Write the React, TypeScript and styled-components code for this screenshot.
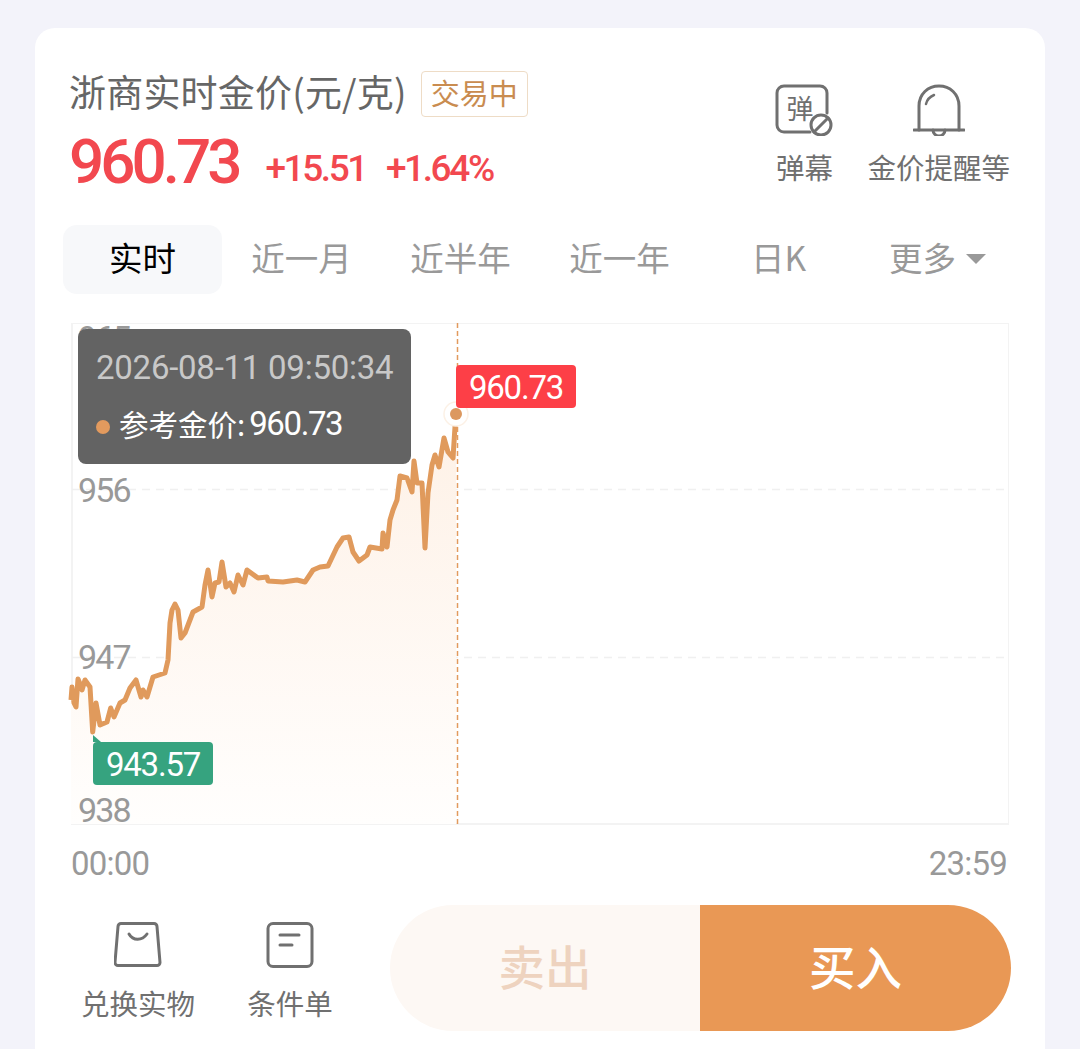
import React from 'react';
import styled, { createGlobalStyle } from 'styled-components';

const LATIN = `Roboto, "Noto Sans CJK SC", sans-serif`;
const CJK = `"Noto Sans CJK SC", Roboto, sans-serif`;

const GlobalStyle = createGlobalStyle`
    html, body {
        margin: 0;
        height: 1049px;
        overflow: hidden;
        background: #f3f3fa;
    }
    * {
        box-sizing: border-box;
    }
`;

const Card = styled.div`
    width: 1010px;
    height: 1060px;
    margin: 28px 0 0 35px;
    padding-top: 43px;
    background: #fff;
    border-radius: 20px;
    font-family: ${CJK};
`;

const Header = styled.div`
    display: flex;
    justify-content: space-between;
    height: 154px;
    padding: 0 35px;
`;

const TitleRow = styled.div`
    display: flex;
    align-items: center;
    gap: 14px;
    height: 46px;
`;

const Title = styled.div`
    margin-top: -7px;
    margin-left: -1px;
    font-size: 37px;
    line-height: 46px;
    letter-spacing: 0.2px;
    color: #666;
    white-space: nowrap;
`;

const Badge = styled.div`
    width: 107px;
    height: 46px;
    padding-bottom: 3px;
    border: 1px solid #eedcc6;
    border-radius: 4px;
    color: #c98c50;
    font-size: 29px;
    line-height: 40px;
    text-align: center;
`;

const PriceRow = styled.div`
    display: flex;
    align-items: flex-end;
    margin-top: 15px;
    color: #f2484f;
    font-family: ${LATIN};
`;

const Price = styled.div`
    margin-left: -1px;
    font-size: 62px;
    line-height: 60px;
    font-weight: 500;
    letter-spacing: -4px;
`;

const Change = styled.div`
    margin: 0 0 1px 27px;
    font-size: 37px;
    line-height: 44px;
    font-weight: 500;
    letter-spacing: -2.4px;
    & + & {
        margin-left: 20px;
    }
`;

const Actions = styled.div`
    display: flex;
    gap: 33px;
`;

const Action = styled.div`
    display: flex;
    flex-direction: column;
    align-items: center;
    padding-top: 13px;
    color: #707070;
`;

const ActionLabel = styled.div`
    margin-top: 11px;
    font-size: 28.5px;
    line-height: 40px;
    white-space: nowrap;
`;

const Tabs = styled.div`
    display: grid;
    grid-template-columns: repeat(6, 159px);
    margin-left: 28px;
`;

const Tab = styled.div<{ $active?: boolean }>`
    display: flex;
    align-items: center;
    justify-content: center;
    gap: 10px;
    height: 69px;
    padding-bottom: 7px;
    border-radius: 14px;
    font-size: 33.5px;
    background: ${(p) => (p.$active ? '#f7f8fa' : 'transparent')};
    color: ${(p) => (p.$active ? '#000' : '#999')};
`;

const Caret = styled.span`
    width: 0;
    height: 0;
    margin-top: 6px;
    border-left: 10px solid transparent;
    border-right: 10px solid transparent;
    border-top: 10px solid #999;
`;

const Chart = styled.div`
    position: relative;
    width: 938px;
    height: 502px;
    margin: 29px 0 0 36px;
    border: 2px solid #f3f3f3;
    border-width: 1px 1px 2px 2px;
`;

const ChartSvg = styled.svg`
    position: absolute;
    left: -2px;
    top: -1px;
    overflow: visible;
`;

const AxisLabel = styled.div<{ $top: number }>`
    position: absolute;
    left: 5px;
    top: ${(p) => p.$top}px;
    font-family: ${LATIN};
    font-size: 34px;
    line-height: 40px;
    letter-spacing: -1.8px;
    color: #999;
`;

const Tooltip = styled.div`
    position: absolute;
    left: 5px;
    top: 5px;
    width: 333px;
    height: 135px;
    padding: 18px 0 0 18px;
    background: #636363;
    border-radius: 8px;
    font-family: ${LATIN};
`;

const TooltipTime = styled.div`
    font-size: 33px;
    line-height: 42px;
    letter-spacing: -0.25px;
    color: #c8c8c8;
    white-space: nowrap;
`;

const TooltipRow = styled.div`
    display: flex;
    align-items: center;
    margin-top: 14px;
    color: #fff;
    white-space: nowrap;
`;

const TooltipDot = styled.span`
    width: 14px;
    height: 14px;
    margin: 6px 9px 0 0;
    border-radius: 50%;
    background: #e29a5e;
`;

const TooltipName = styled.span`
    margin-top: -3px;
    font-family: ${CJK};
    font-size: 29.5px;
    line-height: 42px;
`;

const TooltipValue = styled.span`
    margin-left: 4px;
    font-size: 33px;
    line-height: 42px;
    letter-spacing: -1.4px;
`;

const PriceTag = styled.div<{ $low?: boolean }>`
    position: absolute;
    left: ${(p) => (p.$low ? 20 : 383)}px;
    top: ${(p) => (p.$low ? 418 : 41)}px;
    width: 120px;
    height: 43px;
    border-radius: 4px;
    background: ${(p) => (p.$low ? '#36a37f' : '#fd3f47')};
    color: #fff;
    font-family: ${LATIN};
    font-size: 33px;
    line-height: 46px;
    letter-spacing: -1.2px;
    text-align: center;
    &::before {
        content: '';
        display: ${(p) => (p.$low ? 'block' : 'none')};
        position: absolute;
        left: 0;
        top: -7px;
        border-left: 8px solid #36a37f;
        border-top: 7px solid transparent;
    }
`;

const AxisRow = styled.div`
    display: flex;
    justify-content: space-between;
    width: 936px;
    margin: 19px 0 0 36px;
    font-family: ${LATIN};
    font-size: 33px;
    line-height: 40px;
    letter-spacing: -0.8px;
    color: #999;
`;

const BottomBar = styled.div`
    display: flex;
    align-items: flex-start;
    margin: 21px 0 0 43px;
`;

const Shortcut = styled.div`
    display: flex;
    flex-direction: column;
    align-items: center;
    width: 120px;
    margin-right: 32px;
    padding-top: 17px;
    color: #707070;
`;

const ShortcutLabel = styled.div`
    margin-top: 15px;
    font-size: 28.5px;
    line-height: 40px;
    white-space: nowrap;
`;

const TradeGroup = styled.div`
    display: flex;
    width: 621px;
    height: 126px;
    margin-left: 8px;
    border-radius: 63px;
    overflow: hidden;
`;

const TradeButton = styled.div<{ $buy?: boolean }>`
    display: flex;
    align-items: center;
    justify-content: center;
    flex: ${(p) => (p.$buy ? '0 0 311px' : '0 0 310px')};
    padding-bottom: 8px;
    font-size: 46.5px;
    font-weight: 500;
    background: ${(p) => (p.$buy ? '#e99855' : '#fdf8f4')};
    color: ${(p) => (p.$buy ? '#fff' : '#eed3bf')};
`;

// page coordinates, read off the reference
const LINE: [number, number][] = [
    [71, 700], [72, 687], [74, 703], [76, 707], [78, 679], [80, 684], [82, 690], [85, 680], [90, 687], [92.7, 732],
    [96, 703], [100, 725], [107, 722], [110.7, 708], [114, 717], [120, 703], [125, 700], [130, 688], [136, 680],
    [141, 697], [143, 690], [147, 697], [153, 677], [165, 673], [168, 660], [170, 623], [172, 610], [175, 604], [178, 610],
    [181, 638], [185, 633], [193, 612], [202, 607], [205, 585], [208, 570], [212, 597], [215, 583], [219, 582],
    [222, 562], [226, 587], [230, 583], [234, 592], [238, 575], [243, 585], [247, 570], [258, 578], [267, 577],
    [268, 581], [283, 582], [297, 580], [305, 582], [313, 570], [320, 567], [328, 566], [337, 547], [343, 538],
    [349, 537], [353, 552], [359, 561], [367, 555], [370, 547], [382, 549], [383, 533], [387, 547], [390, 520],
    [393, 510], [397, 500], [400, 476], [407, 478], [412, 492], [414, 461], [417, 483], [422, 483], [425, 548],
    [428, 493], [432, 465], [435, 455], [439, 467], [444, 438], [448, 452], [453, 458], [455, 427], [456, 414],
];

const linePoints = LINE.map(([x, y]) => `${x},${y}`).join(' ');
const areaPoints = `71,824 ${linePoints} 456,824`;

function PriceChart(): JSX.Element {
    return (
        <Chart>
            <ChartSvg width={938} height={502} viewBox="71 323 938 502">
                <defs>
                    <linearGradient id="area" x1="0" y1="0" x2="0" y2="1">
                        <stop offset="0" stopColor="#fef1e6" />
                        <stop offset="1" stopColor="#fffefd" />
                    </linearGradient>
                </defs>
                <line x1={72} x2={1008} y1={489.5} y2={489.5} stroke="#f0f0f0" strokeWidth={1.5} strokeDasharray="8 6" />
                <line x1={72} x2={1008} y1={657.5} y2={657.5} stroke="#f0f0f0" strokeWidth={1.5} strokeDasharray="8 6" />
                <polygon points={areaPoints} fill="url(#area)" />
                <polyline points={linePoints} fill="none" stroke="#e09a5c" strokeWidth={5} strokeLinejoin="round" />
                <line x1={457.5} x2={457.5} y1={323} y2={824} stroke="#e29a5e" strokeWidth={1.5} strokeDasharray="5 3" />
                <circle cx={456} cy={414} r={12} fill="#fff" stroke="#fcf1e6" strokeWidth={1.5} />
                <circle cx={456} cy={414} r={6} fill="#dc985f" />
            </ChartSvg>
            <AxisLabel $top={-6}>965</AxisLabel>
            <AxisLabel $top={146}>956</AxisLabel>
            <AxisLabel $top={313}>947</AxisLabel>
            <AxisLabel $top={466}>938</AxisLabel>
            <Tooltip>
                <TooltipTime>2026-08-11 09:50:34</TooltipTime>
                <TooltipRow>
                    <TooltipDot />
                    <TooltipName>参考金价:</TooltipName>
                    <TooltipValue>960.73</TooltipValue>
                </TooltipRow>
            </Tooltip>
            <PriceTag>960.73</PriceTag>
            <PriceTag $low>943.57</PriceTag>
        </Chart>
    );
}

function DanmuIcon(): JSX.Element {
    return (
        <svg width={60} height={52} viewBox="0 0 60 52" fill="none" stroke="#707070" strokeWidth={3} strokeLinecap="round">
            <path d="M36 48H10a7 7 0 0 1-7-7V9a7 7 0 0 1 7-7h36a7 7 0 0 1 7 7v20" />
            <text x={26} y={35} fontSize={27} fill="#707070" stroke="none" textAnchor="middle" fontFamily={CJK}>
                弹
            </text>
            <circle cx={47} cy={41} r={10} fill="#fff" />
            <line x1={40} y1={48} x2={54} y2={34} />
        </svg>
    );
}

function BellIcon(): JSX.Element {
    return (
        <svg width={52} height={52} viewBox="0 0 52 52" fill="none" stroke="#707070" strokeWidth={3} strokeLinecap="round">
            <path d="M6 46V22C6 10 15 2 26 2s20 8 20 20v24" />
            <path d="M1 46h50" />
            <path d="M20 46a6 6 0 0 0 12 0" />
            <path d="M13 20c1-4 3-7 8-9" strokeWidth={2.5} />
        </svg>
    );
}

function BagIcon(): JSX.Element {
    return (
        <svg width={48} height={46} viewBox="0 0 48 46" fill="none" stroke="#707070" strokeWidth={3} strokeLinecap="round">
            <path d="M7 1.5h33a3 3 0 0 1 3 3l3 36a3 3 0 0 1-3 3H4a3 3 0 0 1-3-3l3-36a3 3 0 0 1 3-3z" />
            <path d="M15 12c4 7 13 7 18 0" />
        </svg>
    );
}

function OrderIcon(): JSX.Element {
    return (
        <svg width={48} height={46} viewBox="0 0 48 46" fill="none" stroke="#707070" strokeWidth={3} strokeLinecap="round">
            <rect x={2} y={1.5} width={44} height={43} rx={5} />
            <path d="M14 13h19M14 23h12" />
        </svg>
    );
}

function App(): JSX.Element {
    const tabs = ['近一月', '近半年', '近一年', '日K'];

    return (
        <>
            <GlobalStyle />
            <Card>
                <Header>
                    <div>
                        <TitleRow>
                            <Title>浙商实时金价(元/克)</Title>
                            <Badge>交易中</Badge>
                        </TitleRow>
                        <PriceRow>
                            <Price>960.73</Price>
                            <Change>+15.51</Change>
                            <Change>+1.64%</Change>
                        </PriceRow>
                    </div>
                    <Actions>
                        <Action>
                            <DanmuIcon />
                            <ActionLabel>弹幕</ActionLabel>
                        </Action>
                        <Action>
                            <BellIcon />
                            <ActionLabel>金价提醒等</ActionLabel>
                        </Action>
                    </Actions>
                </Header>
                <Tabs>
                    <Tab $active>实时</Tab>
                    {tabs.map((tab) => (
                        <Tab key={tab}>{tab}</Tab>
                    ))}
                    <Tab>
                        更多
                        <Caret />
                    </Tab>
                </Tabs>
                <PriceChart />
                <AxisRow>
                    <span>00:00</span>
                    <span>23:59</span>
                </AxisRow>
                <BottomBar>
                    <Shortcut>
                        <BagIcon />
                        <ShortcutLabel>兑换实物</ShortcutLabel>
                    </Shortcut>
                    <Shortcut>
                        <OrderIcon />
                        <ShortcutLabel>条件单</ShortcutLabel>
                    </Shortcut>
                    <TradeGroup>
                        <TradeButton>卖出</TradeButton>
                        <TradeButton $buy>买入</TradeButton>
                    </TradeGroup>
                </BottomBar>
            </Card>
        </>
    );
}

export default App;
